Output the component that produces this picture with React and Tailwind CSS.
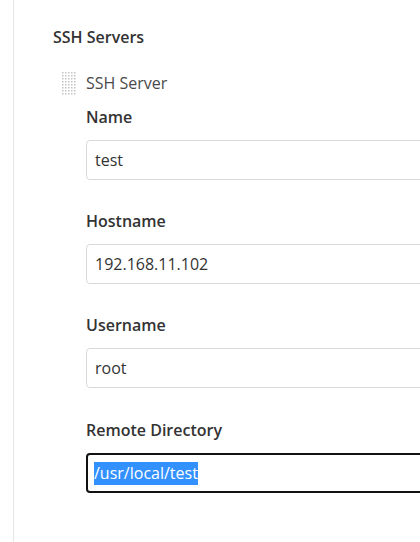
export default function App() {
  const font = { fontFamily: '"Open Sans", "Noto Sans", sans-serif' };
  const Field = ({ label, value, focused, mt }) => (
    <div className={mt}>
      <div className="text-[16px] font-semibold text-[#333] leading-[22px]">{label}</div>
      {focused ? (
        <div className="mt-[12px] h-[40px] w-[400px] rounded-[4px] border-2 border-[#111] bg-white flex items-center pl-[6px]">
          <span className="bg-[#3390ff] text-white text-[16px] leading-[23px]">{value}</span>
        </div>
      ) : (
        <div className="mt-[12px] h-[40px] w-[400px] rounded-[4px] border border-[#d9d9d9] bg-white flex items-center pl-[8px] text-[16px] text-[#333]">
          {value}
        </div>
      )}
    </div>
  );
  return (
    <div className="w-[420px] h-[542px] bg-white overflow-hidden" style={font}>
      <div className="ml-[13px] h-full border-l border-[#e6e6e6] pt-[26px]">
        <div className="pl-[39px] text-[16px] font-semibold text-[#333] leading-[22px]">SSH Servers</div>
        <div className="mt-[24px] flex">
          <div className="ml-[48px] w-[14px] h-[24px] flex-none">
            <svg width="14" height="24" viewBox="0 0 14 24">
              {Array.from({ length: 8 }).map((_, r) =>
                Array.from({ length: 5 }).map((_, c) => (
                  <rect key={r + '-' + c} x={c * 3} y={r * 3} width="1.5" height="1.5" fill="#c4c4c4" />
                ))
              )}
            </svg>
          </div>
          <div className="ml-[10px] flex-1">
            <div className="text-[16px] text-[#4a4a4a] leading-[22px]">SSH Server</div>
            <Field label="Name" value="test" mt="mt-[12px]" />
            <Field label="Hostname" value="192.168.11.102" mt="mt-[30px]" />
            <Field label="Username" value="root" mt="mt-[30px]" />
            <Field label="Remote Directory" value="/usr/local/test" focused mt="mt-[31px]" />
          </div>
        </div>
      </div>
    </div>
  );
}
